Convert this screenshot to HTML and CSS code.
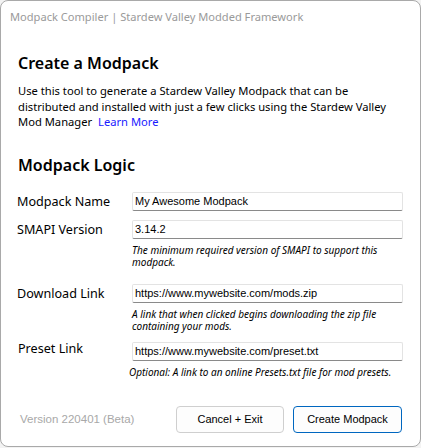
FILE: index.html
```html
<!DOCTYPE html>
<html>
<head>
<meta charset="utf-8">
<link rel="stylesheet" href="styles.css">
</head>
<body>
<div class="window">
  <div class="titlebar">Modpack Compiler | Stardew Valley Modded Framework</div>
  <div class="content">
    <h1 class="heading heading-create">Create a Modpack</h1>
    <p class="intro">Use this tool to generate a Stardew Valley Modpack that can be distributed and installed with just a few clicks using the Stardew Valley Mod Manager <a class="link">Learn More</a></p>
    <h2 class="heading heading-logic">Modpack Logic</h2>
    <div class="form">
      <div class="row">
        <label class="label">Modpack Name</label>
        <div class="field"><div class="input">My Awesome Modpack</div></div>
      </div>
      <div class="row">
        <label class="label">SMAPI Version</label>
        <div class="field">
          <div class="input">3.14.2</div>
          <div class="hint">The minimum required version of SMAPI to support this modpack.</div>
        </div>
      </div>
      <div class="row row-download">
        <label class="label">Download Link</label>
        <div class="field">
          <div class="input">https://www.mywebsite.com/mods.zip</div>
          <div class="hint">A link that when clicked begins downloading the zip file containing your mods.</div>
        </div>
      </div>
      <div class="row row-preset">
        <label class="label">Preset Link</label>
        <div class="field">
          <div class="input">https://www.mywebsite.com/preset.txt</div>
          <div class="hint hint-preset">Optional: A link to an online Presets.txt file for mod presets.</div>
        </div>
      </div>
    </div>
    <div class="footer">
      <span class="version">Version 220401 (Beta)</span>
      <div class="buttons">
        <button class="btn">Cancel + Exit</button>
        <button class="btn btn-primary">Create Modpack</button>
      </div>
    </div>
  </div>
</div>
</body>
</html>
```

FILE: styles.css
```css
html, body {
  margin: 0;
  padding: 0;
  background: #f3f3f3;
}
.window {
  width: 421px;
  height: 447px;
  box-sizing: border-box;
  border: 1px solid #a9a9a9;
  border-radius: 8px;
  background: #ffffff;
  font-family: "Noto Sans", "Open Sans", sans-serif;
  color: #000;
}
.titlebar {
  height: 31px;
  line-height: 31px;
  padding-left: 9px;
  font-size: 11.1px;
  color: #9a9a9a;
}
.content {
  padding: 0 17px 0 17px;
}
.heading {
  margin: 0;
  font-size: 16px;
  font-weight: 600;
  line-height: 22px;
}
.heading-create {
  padding-top: 20px;
}
.intro {
  margin: 9px 0 0;
  font-size: 11.2px;
  line-height: 15.5px;
}
.link {
  color: #1a1aff;
  margin-left: 3px;
}
.heading-logic {
  margin-top: 24px;
}
.form {
  margin-top: 16px;
  display: flex;
  flex-direction: column;
  gap: 8px;
}
.row {
  display: flex;
  align-items: flex-start;
}
.row-download {
  margin-top: 8px;
}
.row-preset {
  margin-top: 2px;
}
.label {
  width: 115px;
  margin-left: -1px;
  font-size: 12.6px;
  line-height: 20px;
}
.row-preset .label {
  margin-top: -3px;
  margin-left: 0;
  width: 114px;
}
.field {
  flex: 1;
  display: flex;
  flex-direction: column;
}
.input {
  height: 19px;
  box-sizing: border-box;
  border: 1px solid #e3e3e3;
  border-bottom: 1px solid #8a8a8a;
  border-radius: 2px;
  padding: 0 2px;
  font-family: "Liberation Sans", Arial, sans-serif;
  font-size: 11px;
  line-height: 17px;
}
.hint {
  margin-top: 5px;
  font-size: 10px;
  font-style: italic;
  line-height: 12px;
  padding-right: 18px;
}
.hint-preset {
  margin-left: -3px;
  padding-right: 0;
}
.footer {
  margin-top: 28px;
  display: flex;
  align-items: center;
  justify-content: space-between;
}
.version {
  font-family: "Liberation Sans", Arial, sans-serif;
  font-size: 11.5px;
  color: #a8a8a8;
  padding-left: 2px;
}
.buttons {
  display: flex;
  gap: 9px;
  margin-right: 1px;
}
.btn {
  width: 108px;
  height: 27px;
  background: #fdfdfd;
  border: 1px solid #cfcfcf;
  border-radius: 4px;
  font-family: "Liberation Sans", Arial, sans-serif;
  font-size: 11px;
  color: #000;
  padding: 0;
}
.btn-primary {
  width: 109px;
  border-color: #0067c0;
}
```
